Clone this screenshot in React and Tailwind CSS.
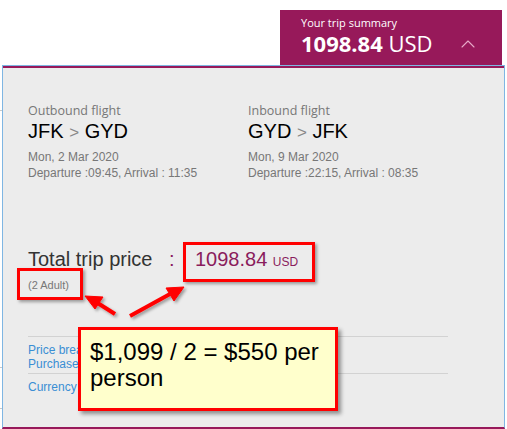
import { ChevronUp } from "lucide-react";

const arial = { fontFamily: '"Liberation Sans", Arial, sans-serif' };

function Leg({ label, from, to, date, times }) {
  return (
    <div className="w-[220px]">
      <div className="font-['Open_Sans',sans-serif] text-[12.5px] leading-[16px] text-[#777]">{label}</div>
      <div className="text-[20px] leading-[24px] text-black" style={arial}>
        {from} <span className="text-[17px] text-[#888]">&gt;</span> {to}
      </div>
      <div className="mt-[4px] text-[12px] leading-[16px] text-[#777]" style={arial}>
        <div>{date}</div>
        <div>{times}</div>
      </div>
    </div>
  );
}

export default function App() {
  return (
    <div className="relative flex h-[429px] w-[507px] flex-col overflow-hidden bg-white">
      {/* trip summary tab */}
      <div className="flex justify-end pt-[10px] pr-[5px]">
        <div className="relative h-[55px] w-[222px] bg-[#97195a] pl-[21px] pt-[5px] font-['Open_Sans',sans-serif] text-white">
          <div className="text-[11px] leading-[15px]">Your trip summary</div>
          <div className="text-[22px] leading-[26px]">
            <span className="font-bold">1098.84</span> USD
          </div>
          <ChevronUp className="absolute right-[22px] top-[22px] h-[24px] w-[24px] text-[#e7a9c8]" strokeWidth={1.1} />
        </div>
      </div>

      {/* summary panel */}
      <div className="mx-[2px] flex flex-1 flex-col border-x border-t border-[#7fb6e3] border-b-2 border-b-[#97195a] bg-[#ececec]">
        <div className="h-[1.5px] bg-[#97195a]" />
        <div className="pl-[25px] pt-[35px]">
          <div className="flex">
            <Leg label="Outbound flight" from="JFK" to="GYD" date="Mon, 2 Mar 2020" times="Departure :09:45, Arrival : 11:35" />
            <Leg label="Inbound flight" from="GYD" to="JFK" date="Mon, 9 Mar 2020" times="Departure :22:15, Arrival : 08:35" />
          </div>

          <div className="mt-[67px] flex text-[20px] leading-[23px]" style={arial}>
            <span className="w-[141px] text-[#333]">Total trip price</span>
            <span className="w-[26px] text-[#8a1c5d]">:</span>
            <span className="text-[#8a1c5d]">
              1098.84 <span className="text-[12px]">USD</span>
            </span>
          </div>
          <div className="mt-[4px] text-[11px] leading-[14px] text-[#777]" style={arial}>(2 Adult)</div>

          <div className="mt-[44px] w-[420px] text-[12px] leading-[14px] text-[#3a8ed4]" style={arial}>
            <div className="border-t border-[#d2d2d2] pt-[6px] pb-[2px]">
              <div>Price breakdown</div>
              <div>Purchase conditions</div>
            </div>
            <div className="border-t border-[#d2d2d2] pt-[6px]">Currency converter</div>
          </div>
        </div>
      </div>

      {/* page edge behind the panel */}
      <div className="absolute left-0 top-[110px] h-px w-[2px] bg-[#c8c8c8]" />
      <div className="absolute left-0 top-[367px] h-px w-[2px] bg-[#c8c8c8]" />
      <div className="absolute left-0 top-[408px] h-px w-[2px] bg-[#c8c8c8]" />

      {/* annotation boxes */}
      <div className="absolute left-[17px] top-[268px] h-[32px] w-[66px] border-[3px] border-[#ff0000] shadow-[2px_2px_3px_rgba(0,0,0,0.35)]" />
      <div className="absolute left-[183px] top-[242px] h-[40px] w-[132px] border-[3px] border-[#ff0000] shadow-[2px_2px_3px_rgba(0,0,0,0.35)]" />

      <svg className="absolute left-0 top-0" width="507" height="429" viewBox="0 0 507 429">
        <defs>
          <filter id="sh" x="-20%" y="-20%" width="140%" height="140%">
            <feDropShadow dx="2" dy="2" stdDeviation="1.5" floodColor="#000" floodOpacity="0.35" />
          </filter>
        </defs>
        <g fill="#ff0000" stroke="#ff0000" filter="url(#sh)">
          <line x1="115" y1="314" x2="96" y2="302" strokeWidth="4" />
          <polygon points="85,296 103,297 95,309" strokeWidth="1" />
          <line x1="130" y1="316" x2="170" y2="294" strokeWidth="4" />
          <polygon points="184,287 174,301 166,288" strokeWidth="1" />
        </g>
      </svg>

      {/* callout */}
      <div
        className="absolute left-[78px] top-[327px] h-[84px] w-[260px] border-[3px] border-[#ff0000] bg-[#ffffcc] pl-[9px] pt-[9px] text-[24px] leading-[26px] text-black shadow-[3px_3px_4px_rgba(0,0,0,0.4)]"
        style={arial}
      >
        $1,099 / 2 = $550 per
        <br />
        person
      </div>
    </div>
  );
}
